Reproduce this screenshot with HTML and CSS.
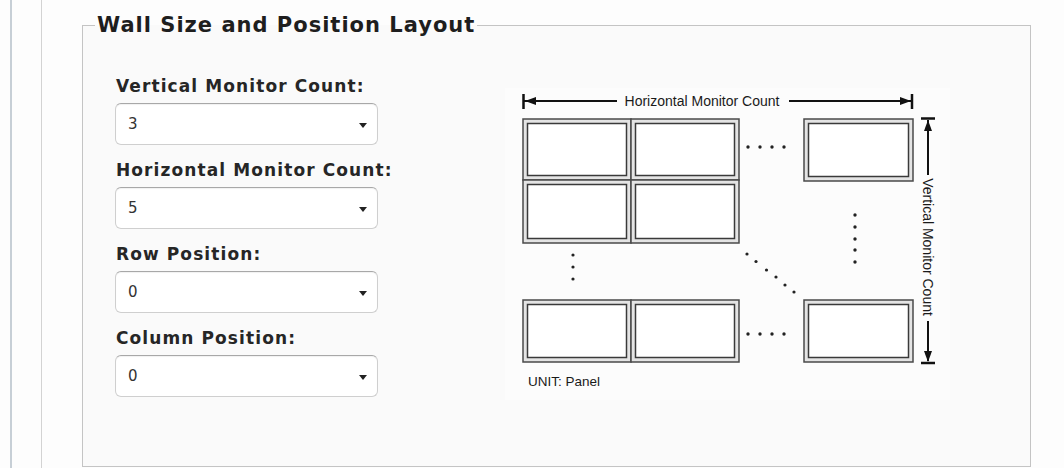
FILE: index.html
```html
<!DOCTYPE html>
<html>
<head>
<meta charset="utf-8">
<link rel="stylesheet" href="styles.css">
</head>
<body>
<div class="page">
  <div class="rail">
    <div class="rail-inner">
      <fieldset class="wall">
        <legend class="wall-title">Wall Size and Position Layout</legend>
        <div class="wall-body">
          <div class="fields">
            <div class="field">
              <label class="field-label">Vertical Monitor Count:</label>
              <div class="select"><span class="select-value">3</span><span class="caret"></span></div>
            </div>
            <div class="field">
              <label class="field-label">Horizontal Monitor Count:</label>
              <div class="select"><span class="select-value">5</span><span class="caret"></span></div>
            </div>
            <div class="field">
              <label class="field-label">Row Position:</label>
              <div class="select"><span class="select-value">0</span><span class="caret"></span></div>
            </div>
            <div class="field">
              <label class="field-label">Column Position:</label>
              <div class="select"><span class="select-value">0</span><span class="caret"></span></div>
            </div>
          </div>
          <svg class="diagram" width="445" height="312" viewBox="505 88 445 312" xmlns="http://www.w3.org/2000/svg">
            <rect x="505" y="88" width="445" height="312" fill="#fcfcfc"/>
            <!-- horizontal dimension arrow -->
            <g stroke="#111" fill="#111">
              <line x1="524" y1="101" x2="617" y2="101" stroke-width="2"/>
              <line x1="789" y1="101" x2="911" y2="101" stroke-width="2"/>
              <line x1="523.5" y1="94" x2="523.5" y2="109" stroke-width="2.5"/>
              <line x1="912" y1="94" x2="912" y2="109" stroke-width="2.5"/>
              <polygon points="525,101 536,97 536,105" stroke="none"/>
              <polygon points="911,101 900,97 900,105" stroke="none"/>
            </g>
            <text x="702" y="106" class="dim-text" text-anchor="middle">Horizontal Monitor Count</text>
            <!-- vertical dimension arrow -->
            <g stroke="#111" fill="#111">
              <line x1="928" y1="120" x2="928" y2="175" stroke-width="2"/>
              <line x1="928" y1="321" x2="928" y2="361" stroke-width="2"/>
              <line x1="921" y1="118.5" x2="935" y2="118.5" stroke-width="2.5"/>
              <line x1="921" y1="363" x2="935" y2="363" stroke-width="2.5"/>
              <polygon points="928,120 924,131 932,131" stroke="none"/>
              <polygon points="928,362 924,351 932,351" stroke="none"/>
            </g>
            <text x="928" y="252" class="dim-text" text-anchor="middle" transform="rotate(90 928 247)">Vertical Monitor Count</text>
            <!-- panels -->
            <g class="panel">
              <rect x="523" y="119" width="108" height="61" class="p-out"/>
              <rect x="527.5" y="123.5" width="99" height="52" class="p-in"/>
            </g>
            <g class="panel">
              <rect x="631" y="119" width="108" height="61" class="p-out"/>
              <rect x="635.5" y="123.5" width="99" height="52" class="p-in"/>
            </g>
            <g class="panel">
              <rect x="523" y="180" width="108" height="63" class="p-out"/>
              <rect x="527.5" y="184.5" width="99" height="54" class="p-in"/>
            </g>
            <g class="panel">
              <rect x="631" y="180" width="108" height="63" class="p-out"/>
              <rect x="635.5" y="184.5" width="99" height="54" class="p-in"/>
            </g>
            <g class="panel">
              <rect x="804" y="119" width="109" height="62" class="p-out"/>
              <rect x="808.5" y="123.5" width="100" height="53" class="p-in"/>
            </g>
            <g class="panel">
              <rect x="523" y="300" width="108" height="62" class="p-out"/>
              <rect x="527.5" y="304.5" width="99" height="53" class="p-in"/>
            </g>
            <g class="panel">
              <rect x="631" y="300" width="108" height="62" class="p-out"/>
              <rect x="635.5" y="304.5" width="99" height="53" class="p-in"/>
            </g>
            <g class="panel">
              <rect x="804" y="300" width="109" height="62" class="p-out"/>
              <rect x="808.5" y="304.5" width="100" height="53" class="p-in"/>
            </g>
            <!-- dots -->
            <g fill="#222">
              <circle cx="748" cy="147" r="1.7"/><circle cx="760" cy="147" r="1.7"/><circle cx="772" cy="147" r="1.7"/><circle cx="784" cy="147" r="1.7"/>
              <circle cx="748" cy="334" r="1.7"/><circle cx="760" cy="334" r="1.7"/><circle cx="772" cy="334" r="1.7"/><circle cx="784" cy="334" r="1.7"/>
              <circle cx="855" cy="215" r="1.7"/><circle cx="855" cy="227" r="1.7"/><circle cx="855" cy="239" r="1.7"/><circle cx="855" cy="250" r="1.7"/><circle cx="855" cy="262" r="1.7"/>
              <circle cx="573" cy="255" r="1.6"/><circle cx="573" cy="267" r="1.6"/><circle cx="573" cy="279" r="1.6"/>
              <circle cx="747" cy="254" r="1.6"/><circle cx="756" cy="261.5" r="1.6"/><circle cx="766.5" cy="270" r="1.6"/><circle cx="776" cy="277" r="1.6"/><circle cx="785" cy="285" r="1.6"/><circle cx="794" cy="292" r="1.6"/>
            </g>
            <text x="528" y="386" class="unit-text">UNIT: Panel</text>
          </svg>
        </div>
      </fieldset>
    </div>
  </div>
</div>
</body>
</html>
```

FILE: styles.css
```css
html, body {
  margin: 0;
  padding: 0;
  background: #fdfdfd;
  height: 100%;
  overflow: hidden;
}

.page {
  height: 468px;
  padding-left: 10px;
  box-sizing: border-box;
}

.rail {
  height: 100%;
  border-left: 2px solid #c7cfd6;
  padding-left: 29px;
  box-sizing: border-box;
}

.rail-inner {
  height: 100%;
  border-left: 1px solid #d3d3d3;
  padding-left: 40px;
  padding-top: 13px;
  box-sizing: border-box;
}

.wall {
  margin: 0;
  padding: 0;
  width: 949px;
  box-sizing: border-box;
  border: 1px solid #c4c4c4;
  background: #fafafa;
  font-family: "DejaVu Sans", Verdana, sans-serif;
}

.wall-title {
  margin-left: 12px;
  padding: 0 2px;
  font-size: 21px;
  line-height: 24px;
  letter-spacing: 1px;
  font-weight: bold;
  color: #1e1e1e;
}

.wall-body {
  display: flex;
  align-items: flex-start;
  height: 429px;
  padding-top: 39px;
  box-sizing: border-box;
}

.fields {
  display: flex;
  flex-direction: column;
  gap: 15px;
  width: 263px;
  margin-left: 32px;
}

.field {
  display: flex;
  flex-direction: column;
  gap: 7px;
}

.field-label {
  font-size: 17px;
  line-height: 20px;
  letter-spacing: 1.1px;
  font-weight: bold;
  color: #262626;
  padding-left: 1px;
  white-space: nowrap;
}

.select {
  height: 42px;
  box-sizing: border-box;
  display: flex;
  align-items: center;
  justify-content: space-between;
  padding: 0 10px 0 12px;
  background: #ffffff;
  border: 1px solid #cfcfcf;
  border-top-color: #a8a8a8;
  border-radius: 6px;
  box-shadow: inset 0 1px 1px rgba(0, 0, 0, 0.06);
}

.select-value {
  font-size: 15px;
  color: #333;
}

.caret {
  width: 0;
  height: 0;
  border-left: 4px solid transparent;
  border-right: 4px solid transparent;
  border-top: 5px solid #222;
  margin-top: 2px;
}

.diagram {
  display: block;
  margin-left: 127px;
  margin-top: 12px;
  flex: none;
}

.dim-text {
  font-family: "Liberation Sans", Arial, sans-serif;
  font-size: 14px;
  fill: #1a1a1a;
}

.unit-text {
  font-family: "Liberation Sans", Arial, sans-serif;
  font-size: 13.5px;
  fill: #1a1a1a;
}

.p-out {
  fill: #e4e4e4;
  stroke: #4a4a4a;
  stroke-width: 1.5;
}

.p-in {
  fill: #ffffff;
  stroke: #3a3a3a;
  stroke-width: 1.5;
}
```
